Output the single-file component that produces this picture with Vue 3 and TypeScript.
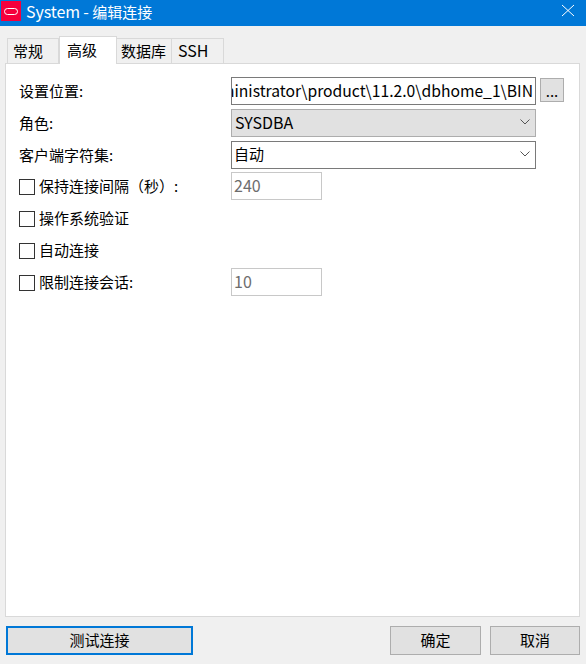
<script setup lang="ts">
const tabs = [
  { name: '常规', cls: 'general' },
  { name: '高级', cls: 'advanced' },
  { name: '数据库', cls: 'database' },
  { name: 'SSH', cls: 'ssh' },
]
const activeTab = '高级'
</script>

<template>
  <div class="window">
    <header class="titlebar">
      <span class="app-icon"><span class="app-ring"></span></span>
      <span class="title"><span class="latin">System - </span>编辑连接</span>
      <svg class="close" width="14" height="14" viewBox="0 0 14 14">
        <path d="M1 1L13 12M13 1L1 12" stroke="#fff" stroke-width="1" fill="none" />
      </svg>
    </header>

    <nav class="tabs">
      <div v-for="t in tabs" :key="t.name" class="tab" :class="[t.cls, { active: t.name === activeTab }]">{{ t.name }}</div>
    </nav>

    <section class="panel">
      <div class="row">
        <label class="label">设置位置:</label>
        <div class="field path"><span>C:\Users\Administrator\product\11.2.0\dbhome_1\BIN</span></div>
        <button class="dots">...</button>
      </div>
      <div class="row">
        <label class="label">角色:</label>
        <div class="field select disabled">
          <span class="latin">SYSDBA</span>
          <svg width="10" height="6" viewBox="0 0 10 6"><path d="M0.5 0.5L5 5L9.5 0.5" stroke="#555" fill="none" /></svg>
        </div>
      </div>
      <div class="row tight">
        <label class="label">客户端字符集:</label>
        <div class="field select">
          <span>自动</span>
          <svg width="10" height="6" viewBox="0 0 10 6"><path d="M0.5 0.5L5 5L9.5 0.5" stroke="#555" fill="none" /></svg>
        </div>
      </div>
      <div class="row">
        <label class="label check"><i class="box"></i><span>保持连接间隔（秒）:</span></label>
        <div class="field number">240</div>
      </div>
      <div class="row">
        <label class="label check"><i class="box"></i><span>操作系统验证</span></label>
      </div>
      <div class="row">
        <label class="label check"><i class="box"></i><span>自动连接</span></label>
      </div>
      <div class="row">
        <label class="label check"><i class="box"></i><span>限制连接会话:</span></label>
        <div class="field number">10</div>
      </div>
    </section>

    <footer class="footer">
      <button class="btn test">测试连接</button>
      <div class="right">
        <button class="btn ok">确定</button>
        <button class="btn cancel">取消</button>
      </div>
    </footer>
  </div>
</template>

<style>
html, body {
  margin: 0;
  background: #f0f0f0;
}
</style>

<style scoped>
.window {
  width: 586px;
  height: 664px;
  display: flex;
  flex-direction: column;
  background: #f0f0f0;
  font-family: "Noto Sans CJK SC", "Noto Sans", sans-serif;
  font-size: 15px;
  color: #000;
  overflow: hidden;
}

/* title bar */
.titlebar {
  height: 26px;
  box-sizing: border-box;
  flex: none;
  display: flex;
  align-items: center;
  background: #0078d7;
  color: #fff;
  padding: 0 11px 5px 1px;
}
.app-icon {
  width: 20px;
  height: 20px;
  margin-bottom: -1px;
  background: #f5003c;
  display: flex;
  align-items: center;
  justify-content: center;
}
.app-ring {
  box-sizing: border-box;
  width: 14px;
  height: 7px;
  border: 1px solid #fff;
  border-radius: 3.5px;
}
.title {
  margin-left: 5px;
  font-size: 15px;
  flex: 1;
  white-space: pre;
}
.title .latin {
  letter-spacing: -0.1px;
}

/* tabs */
.tabs {
  display: flex;
  align-items: flex-end;
  height: 37px;
  flex: none;
  padding-left: 7px;
  position: relative;
  z-index: 1;
}
.tab {
  height: 25px;
  box-sizing: border-box;
  border: 1px solid #d9d9d9;
  border-bottom: none;
  line-height: 23px;
  background: #f0f0f0;
  white-space: nowrap;
}
.tab.general {
  width: 52px;
  padding-left: 5px;
}
.tab.database {
  width: 56px;
  padding-left: 4px;
  margin-left: -1px;
}
.tab.ssh {
  width: 53px;
  margin-left: -1px;
  padding-left: 6px;
  font-size: 16px;
}
.tab.advanced {
  padding-left: 7px;
}
.tab.active {
  height: 28px;
  width: 58px;
  background: #fff;
  line-height: 25px;
  margin-bottom: -1px;
}

/* panel */
.panel {
  height: 554px;
  flex: none;
  box-sizing: border-box;
  margin: 0 6px 0 5px;
  border: 1px solid #d9d9d9;
  background: #fff;
  padding: 13px 13px 0;
  display: flex;
  flex-direction: column;
  gap: 4px;
}
.row {
  display: flex;
  align-items: center;
  height: 28px;
}
.row.tight {
  margin-bottom: -1px;
}
.row.tight .field {
  padding-bottom: 3px;
}
.label {
  width: 212px;
  flex: none;
  white-space: nowrap;
  display: flex;
  align-items: center;
  padding-bottom: 2px;
  box-sizing: border-box;
}
.field {
  box-sizing: border-box;
  width: 305px;
  height: 28px;
  border: 1px solid #7a7a7a;
  background: #fff;
  display: flex;
  align-items: center;
  padding: 0 2px 2px;
  overflow: hidden;
  white-space: nowrap;
}
.path {
  justify-content: flex-end;
  font-size: 15.7px;
}
.select {
  justify-content: space-between;
  padding-right: 5px;
}
.latin {
  font-size: 16px;
}
.disabled {
  background: #e1e1e1;
  border-color: #adadad;
  padding-left: 3px;
}
.number {
  width: 91px;
  border-color: #c8c8c8;
  color: #6d6d6d;
  font-size: 16px;
}
.dots {
  box-sizing: border-box;
  width: 24px;
  height: 24px;
  margin: 0 0 2px 4px;
  border: 1px solid #adadad;
  background: #e1e1e1;
  font: inherit;
  color: #000;
  padding: 0;
}

/* check rows */
.check {
  gap: 4px;
}
.box {
  box-sizing: border-box;
  width: 16px;
  height: 16px;
  margin-top: 4px;
  border: 1px solid #333;
  background: #fff;
  flex: none;
}

/* footer */
.footer {
  flex: 1;
  display: flex;
  align-items: flex-start;
  justify-content: space-between;
  padding: 9px 6px 0;
}
.right {
  display: flex;
  gap: 9px;
}
.btn {
  box-sizing: border-box;
  height: 29px;
  border: 1px solid #adadad;
  background: #e1e1e1;
  font: inherit;
  color: #000;
  padding: 0 0 3px;
  width: 91px;
}
.btn.test {
  width: 187px;
  border: 2px solid #0078d7;
}
.btn.cancel {
  width: 90px;
}
</style>
